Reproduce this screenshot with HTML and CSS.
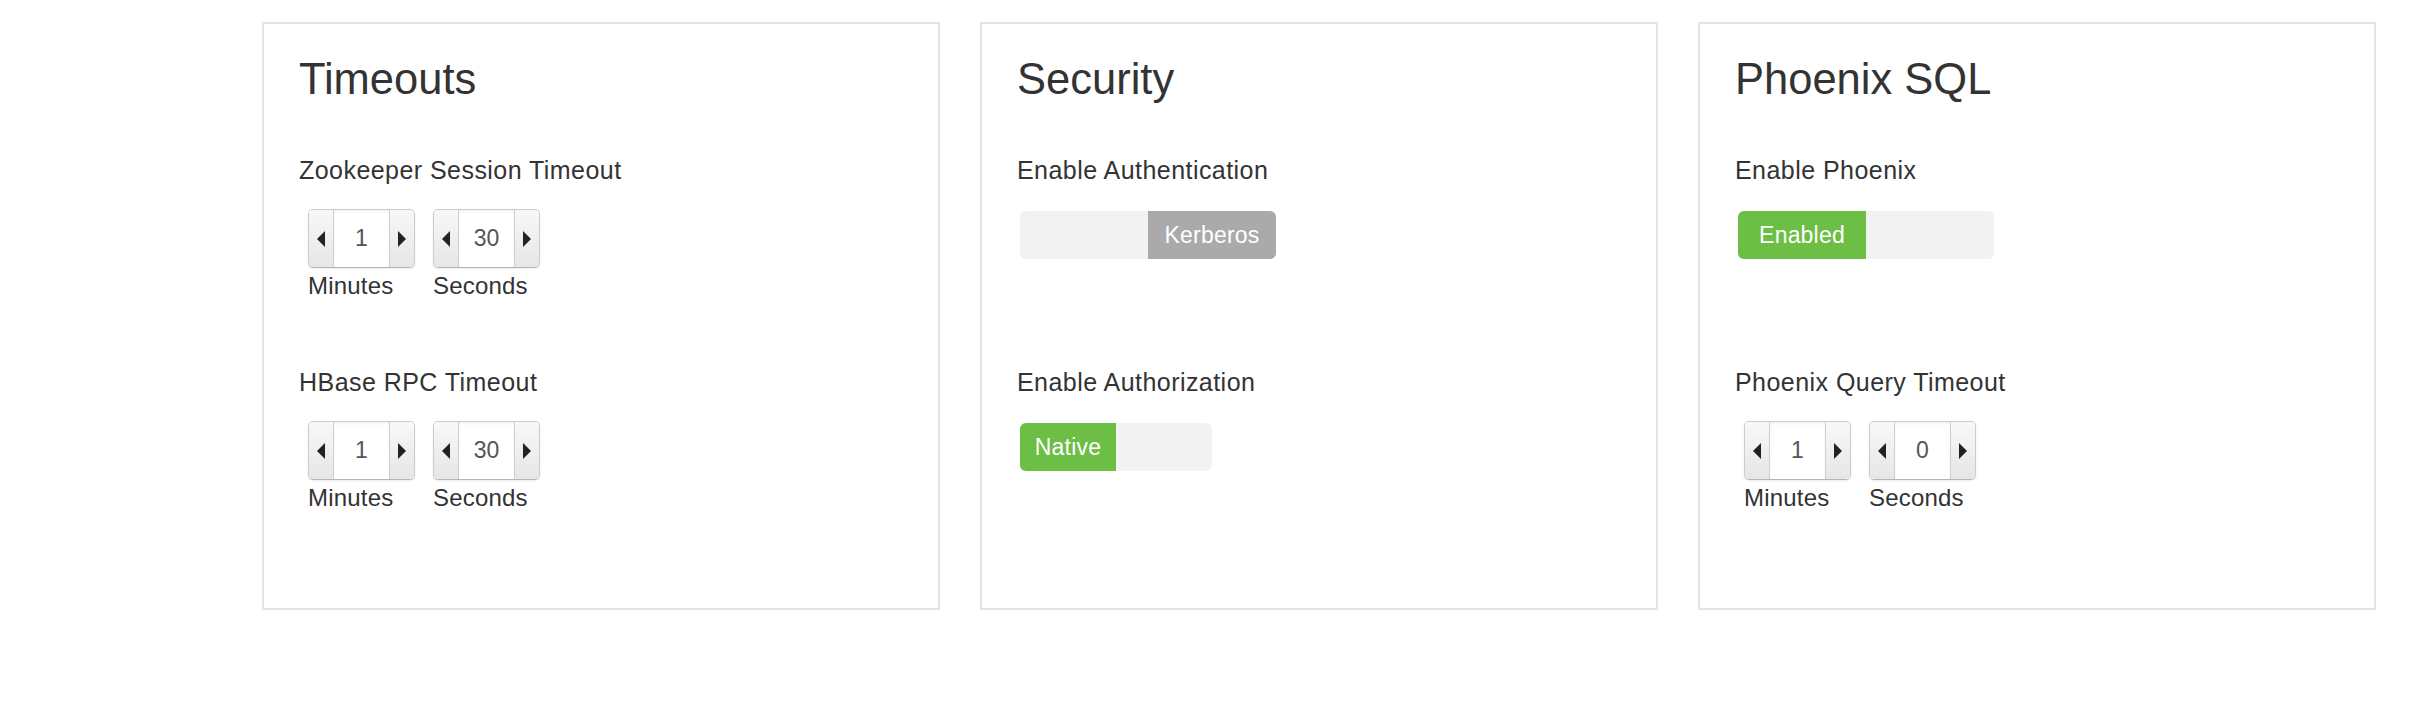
FILE: index.html
```html
<!DOCTYPE html>
<html>
<head>
<meta charset="utf-8">
<title>Settings</title>
<link rel="stylesheet" href="styles.css">
</head>
<body>
<div class="row">
  <section class="panel">
    <h3 class="panel-title">Timeouts</h3>
    <div class="fields">
      <div class="field">
        <div class="field-label">Zookeeper Session Timeout</div>
        <div class="spin-group">
          <div class="spin-col">
            <div class="spinner"><span class="spin-btn"><i class="arrow-left"></i></span><span class="spin-val">1</span><span class="spin-btn"><i class="arrow-right"></i></span></div>
            <div class="spin-caption">Minutes</div>
          </div>
          <div class="spin-col">
            <div class="spinner"><span class="spin-btn"><i class="arrow-left"></i></span><span class="spin-val">30</span><span class="spin-btn"><i class="arrow-right"></i></span></div>
            <div class="spin-caption">Seconds</div>
          </div>
        </div>
      </div>
      <div class="field">
        <div class="field-label">HBase RPC Timeout</div>
        <div class="spin-group">
          <div class="spin-col">
            <div class="spinner"><span class="spin-btn"><i class="arrow-left"></i></span><span class="spin-val">1</span><span class="spin-btn"><i class="arrow-right"></i></span></div>
            <div class="spin-caption">Minutes</div>
          </div>
          <div class="spin-col">
            <div class="spinner"><span class="spin-btn"><i class="arrow-left"></i></span><span class="spin-val">30</span><span class="spin-btn"><i class="arrow-right"></i></span></div>
            <div class="spin-caption">Seconds</div>
          </div>
        </div>
      </div>
    </div>
  </section>

  <section class="panel">
    <h3 class="panel-title">Security</h3>
    <div class="fields">
      <div class="field">
        <div class="field-label">Enable Authentication</div>
        <div class="toggle toggle-wide">
          <span class="toggle-half"></span>
          <span class="toggle-half toggle-grey">Kerberos</span>
        </div>
      </div>
      <div class="field">
        <div class="field-label">Enable Authorization</div>
        <div class="toggle toggle-narrow">
          <span class="toggle-half toggle-green">Native</span>
          <span class="toggle-half"></span>
        </div>
      </div>
    </div>
  </section>

  <section class="panel">
    <h3 class="panel-title">Phoenix SQL</h3>
    <div class="fields">
      <div class="field">
        <div class="field-label">Enable Phoenix</div>
        <div class="toggle toggle-wide">
          <span class="toggle-half toggle-green">Enabled</span>
          <span class="toggle-half"></span>
        </div>
      </div>
      <div class="field">
        <div class="field-label">Phoenix Query Timeout</div>
        <div class="spin-group">
          <div class="spin-col">
            <div class="spinner"><span class="spin-btn"><i class="arrow-left"></i></span><span class="spin-val">1</span><span class="spin-btn"><i class="arrow-right"></i></span></div>
            <div class="spin-caption">Minutes</div>
          </div>
          <div class="spin-col">
            <div class="spinner"><span class="spin-btn"><i class="arrow-left"></i></span><span class="spin-val">0</span><span class="spin-btn"><i class="arrow-right"></i></span></div>
            <div class="spin-caption">Seconds</div>
          </div>
        </div>
      </div>
    </div>
  </section>
</div>
</body>
</html>
```

FILE: styles.css
```css
html, body {
  margin: 0;
  padding: 0;
  background: #ffffff;
}

body {
  font-family: "Liberation Sans", Arial, sans-serif;
  color: #333333;
}

.row {
  display: flex;
  gap: 40px;
  padding: 22px 0 0 262px;
}

.panel {
  box-sizing: border-box;
  width: 678px;
  height: 588px;
  border: 2px solid #e4e4e4;
  padding: 31px 35px 0 35px;
}

.panel-title {
  margin: 0;
  font-size: 43.5px;
  line-height: 48px;
  font-weight: normal;
  color: #333333;
}

.fields {
  display: flex;
  flex-direction: column;
  margin-top: 53px;
}

.field {
  height: 212px;
}

.field-label {
  font-size: 25px;
  line-height: 28px;
  color: #333333;
  letter-spacing: 0.45px;
}

.spin-group {
  display: flex;
  gap: 18px;
  margin-top: 25px;
  padding-left: 9px;
}

.spin-col {
  display: flex;
  flex-direction: column;
}

.spinner {
  box-sizing: border-box;
  display: flex;
  width: 107px;
  height: 59px;
  border: 1px solid #cccccc;
  border-bottom-color: #b5b5b5;
  border-radius: 5px;
  overflow: hidden;
  box-shadow: 0 1px 2px rgba(0, 0, 0, 0.08);
  background: #ffffff;
}

.spin-btn {
  display: flex;
  align-items: center;
  justify-content: center;
  width: 24px;
  flex: none;
  background: linear-gradient(to bottom, #f8f8f8, #e6e6e6);
}

.spin-btn:first-child {
  border-right: 1px solid #cfcfcf;
}

.spin-btn:last-child {
  border-left: 1px solid #cfcfcf;
}

.spin-val {
  flex: 1;
  display: flex;
  align-items: center;
  justify-content: center;
  font-size: 23px;
  color: #555555;
  background: #ffffff;
  box-shadow: inset 0 2px 3px rgba(0, 0, 0, 0.05);
}

.arrow-left {
  width: 0;
  height: 0;
  border-top: 8px solid transparent;
  border-bottom: 8px solid transparent;
  border-right: 8px solid #222222;
}

.arrow-right {
  width: 0;
  height: 0;
  border-top: 8px solid transparent;
  border-bottom: 8px solid transparent;
  border-left: 8px solid #222222;
}

.spin-caption {
  margin-top: 5px;
  font-size: 24px;
  line-height: 26px;
  color: #333333;
  letter-spacing: 0.2px;
}

.toggle {
  display: flex;
  height: 48px;
  margin-top: 27px;
  margin-left: 3px;
  border-radius: 6px;
  overflow: hidden;
  background: #f2f2f2;
}

.toggle-wide {
  width: 256px;
}

.toggle-narrow {
  width: 192px;
}

.toggle-half {
  flex: 1;
  display: flex;
  align-items: center;
  justify-content: center;
  font-size: 23px;
  color: #ffffff;
  letter-spacing: 0.2px;
}

.toggle-grey {
  background: #aaaaaa;
}

.toggle-green {
  background: #6cbe45;
}
```
